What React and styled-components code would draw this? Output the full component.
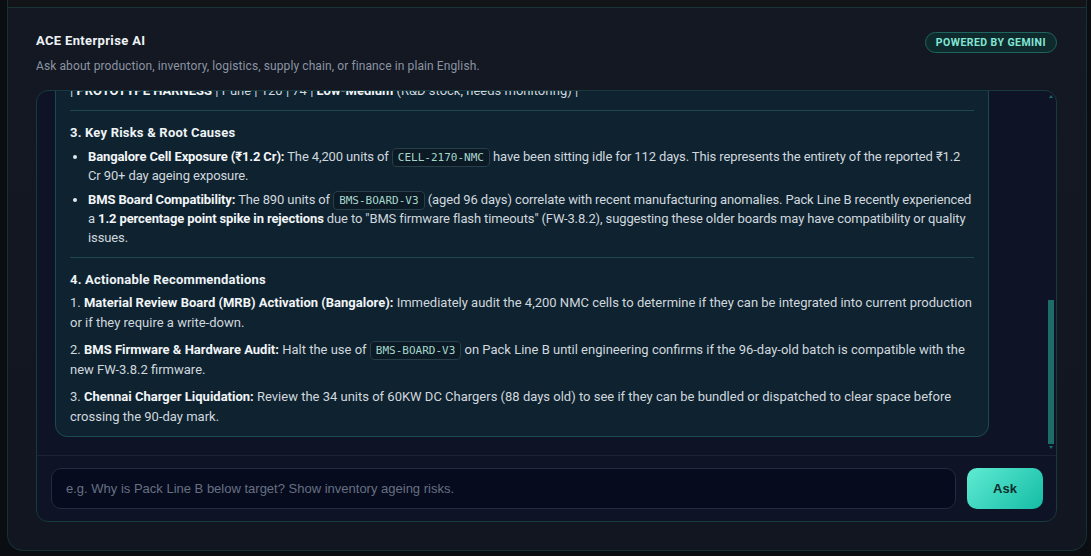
import React, { useLayoutEffect, useRef, useState } from "react";
import styled, { createGlobalStyle } from "styled-components";

const GlobalStyle = createGlobalStyle`
  * { box-sizing: border-box; }
  html, body { margin: 0; background: #0a0d11; }
  body {
    font-family: Roboto, "Noto Sans", "DejaVu Sans", sans-serif;
    color: #cfd8de;
  }
`;

// --- Layout shell ---
const Page = styled.div`
  height: 556px;
  display: flex;
  padding: 0 4px 5px 7px;
`;

const Panel = styled.div`
  flex: 1;
  display: flex;
  flex-direction: column;
  border: 1px solid #163033;
  border-top: none;
  border-radius: 0 0 16px 16px;
  background: linear-gradient(180deg, #131822 0%, #111621 100%);
  overflow: hidden;
`;

const Strip = styled.div`
  height: 8px;
  flex-shrink: 0;
  background: #121418;
  border-bottom: 1px solid #173437;
`;

const Body = styled.section`
  flex: 1;
  display: flex;
  flex-direction: column;
  padding: 23px 29px 27px 28px;
  min-height: 0;
`;

// --- Header ---
const Header = styled.header`
  display: flex;
  justify-content: space-between;
  align-items: flex-start;
`;

const Title = styled.h1`
  margin: 1px 0 0;
  font-size: 13px;
  line-height: 18px;
  font-weight: 700;
  letter-spacing: 0.35px;
  color: #eef2f5;
`;

const Subtitle = styled.p`
  margin: 7px 0 0;
  font-size: 12px;
  line-height: 18px;
  letter-spacing: 0.1px;
  color: #8b94a2;
`;

const Badge = styled.span`
  display: inline-flex;
  align-items: center;
  height: 21px;
  margin-top: 1px;
  padding: 0 10px;
  border-radius: 999px;
  border: 1px solid #1e655f;
  background: #0f2a2d;
  color: #82e6d5;
  font-size: 10.5px;
  font-weight: 700;
  letter-spacing: 0.45px;
`;

// --- Chat container ---
const Chat = styled.div`
  margin-top: 15px;
  height: 432px;
  display: flex;
  flex-direction: column;
  border: 1px solid #163a3d;
  border-radius: 12px;
  background: #0e1426;
  overflow: hidden;
`;

const ScrollArea = styled.div`
  position: relative;
  flex: 1;
  min-height: 0;
  display: flex;
`;

const Scroll = styled.div`
  flex: 1;
  overflow-y: auto;
  scrollbar-width: none;
  padding: 18px 8px 18px 18px;
  display: flex;
  flex-direction: column;
  gap: 14px;

  &::-webkit-scrollbar {
    display: none;
  }
`;

// drawn scrollbar (the native one is hidden in the capture)
const Track = styled.div`
  position: absolute;
  top: 0;
  bottom: 0;
  right: 1px;
  width: 8px;
  pointer-events: none;
`;

const Thumb = styled.div`
  position: absolute;
  left: 1px;
  right: 1px;
  background: #1d6c67;
`;

const Arrow = styled.span`
  position: absolute;
  left: 2px;
  ${(p) => (p.$down ? "bottom: 6px;" : "top: 4px;")}
  width: 0;
  height: 0;
  border-left: 2.5px solid transparent;
  border-right: 2.5px solid transparent;
  ${(p) => (p.$down ? "border-top" : "border-bottom")}: 3px solid #1d6c67;
`;

const Bubble = styled.div`
  flex-shrink: 0;
  align-self: ${(p) => (p.$user ? "flex-end" : "flex-start")};
  width: ${(p) => (p.$user ? "auto" : "934px")};
  max-width: 934px;
  padding: ${(p) => (p.$user ? "10px 14px" : "12px 14px 10px")};
  border-radius: 12px;
  border: 1px solid ${(p) => (p.$user ? "#1f5f5a" : "#1b4b50")};
  background: ${(p) => (p.$user ? "#123331" : "#0f2230")};
  font-size: 13px;
  line-height: 19.5px;
  color: ${(p) => (p.$user ? "#e3f5f1" : "#cfd8de")};

  strong {
    color: #f1f5f7;
    font-weight: 700;
  }
  p {
    margin: 0 0 8px;
  }
  > :last-child {
    margin-bottom: 0;
  }
`;

const Heading = styled.h4`
  margin: 0 0 4px;
  font-size: 13px;
  line-height: 19.5px;
  font-weight: 700;
  letter-spacing: 0.2px;
  color: #eef3f5;
`;

const Rule = styled.hr`
  border: none;
  border-top: 1px solid #1d474c;
  margin: 10px 0 12px;
`;

const Bullets = styled.ul`
  margin: 0;
  padding-left: 18px;
  line-height: 19px;
  letter-spacing: -0.12px;

  li {
    margin-bottom: 5px;
  }
  li::marker {
    color: #e2e9ed;
  }
`;

const Code = styled.code`
  font-family: "DejaVu Sans Mono", "Liberation Mono", monospace;
  font-size: 11px;
  line-height: 1;
  letter-spacing: 0;
  padding: 2px 5px;
  border-radius: 4px;
  border: 1px solid #263f48;
  background: #0b1a24;
  color: #a5d6cc;
`;

// --- Input row ---
const InputRow = styled.form`
  flex-shrink: 0;
  display: flex;
  gap: 11px;
  padding: 12px 13px 12px 14px;
  border-top: 1px solid #1c2434;
`;

const Input = styled.input`
  flex: 1;
  height: 41px;
  padding: 0 14px;
  border-radius: 10px;
  border: 1px solid #252b3e;
  background: #060b1d;
  color: #e1e6ea;
  font-family: "Liberation Sans", Arial, sans-serif;
  font-size: 13px;
  outline: none;

  &::placeholder {
    color: #667083;
  }
`;

const AskButton = styled.button`
  width: 76px;
  height: 41px;
  border: none;
  border-radius: 10px;
  background: linear-gradient(135deg, #5febd3 0%, #15bca5 100%);
  color: #0f2e2c;
  font-family: "Liberation Sans", Arial, sans-serif;
  font-size: 13px;
  font-weight: 700;
  cursor: pointer;
`;

const tableRows = [
  ["CELL-2170-NMC", "Bangalore | 4,200 | 112", "High", "(₹1.2 Cr exposure)"],
  ["BMS-BOARD-V3", "Pune | 890 | 96", "High", "(quality correlation)"],
  ["60KW DC CHARGER", "Chennai | 34 | 88", "Medium", "(nearing 90-day mark)"],
  ["THERMAL PAD KIT", "Bangalore | 2,600 | 81", "Medium", "(slow-moving consumable)"],
  ["HV CONTACTOR", "Pune | 410 | 79", "Medium", "(supplier recall pending)"],
  ["PROTOTYPE HARNESS", "Pune | 120 | 74", "Low-Medium", "(R&D stock, needs monitoring)"],
];

// track runs from 9px below the top to 11px above the bottom of the scroll area
const TRACK_TOP = 9;
const TRACK_BOTTOM = 11;

export default function App() {
  const scrollRef = useRef(null);
  const [bar, setBar] = useState({ top: 0, height: 0 });

  const measure = () => {
    const el = scrollRef.current;
    if (!el) return;
    const track = el.clientHeight - TRACK_TOP - TRACK_BOTTOM;
    const height = Math.max(20, (track * el.clientHeight) / el.scrollHeight);
    const range = el.scrollHeight - el.clientHeight;
    const top = TRACK_TOP + (range > 0 ? ((track - height) * el.scrollTop) / range : 0);
    setBar({ top, height });
  };

  useLayoutEffect(() => {
    const el = scrollRef.current;
    if (el) el.scrollTop = el.scrollHeight;
    measure();
  }, []);

  return (
    <>
      <GlobalStyle />
      <Page>
        <Panel>
          <Strip />
          <Body>
            <Header>
              <div>
                <Title>ACE Enterprise AI</Title>
                <Subtitle>
                  Ask about production, inventory, logistics, supply chain, or finance in plain English.
                </Subtitle>
              </div>
              <Badge>POWERED BY GEMINI</Badge>
            </Header>

            <Chat>
              <ScrollArea>
                <Scroll ref={scrollRef} onScroll={measure}>
                  <Bubble>
                    <p>Hello! I'm ACE Enterprise AI. Ask me anything about your plants, stock or shipments.</p>
                  </Bubble>
                  <Bubble $user>Show inventory ageing risks across all plants.</Bubble>
                  <Bubble>
                    <Heading>1. Executive Summary</Heading>
                    <p>
                      Inventory ageing beyond 90 days stands at <strong>₹1.2 Cr</strong>, concentrated almost
                      entirely in a single SKU at the Bangalore plant. Two further batches are approaching the
                      90-day threshold and should be actioned this week to avoid additional write-down exposure.
                      Overall stock cover remains healthy at 38 days, with Pune and Chennai trending within
                      planned limits for the current quarter.
                    </p>
                    <Rule />
                    <Heading>2. Inventory Ageing Snapshot</Heading>
                    <p>The following SKUs have crossed or are approaching the 90-day ageing threshold:</p>
                    <p>| Item | Plant | Qty | Age (Days) | Risk Level |</p>
                    <p>| :--- | :--- | :--- | :--- | :--- |</p>
                    {tableRows.map(([item, mid, risk, note]) => (
                      <p key={item}>
                        | <strong>{item}</strong> | {mid} | <strong>{risk}</strong> {note} |
                      </p>
                    ))}
                    <Rule />
                    <Heading>3. Key Risks &amp; Root Causes</Heading>
                    <Bullets>
                      <li>
                        <strong>Bangalore Cell Exposure (₹1.2 Cr):</strong> The 4,200 units of{" "}
                        <Code>CELL-2170-NMC</Code> have been sitting idle for 112 days. This represents the
                        entirety of the reported ₹1.2 Cr 90+ day ageing exposure.
                      </li>
                      <li>
                        <strong>BMS Board Compatibility:</strong> The 890 units of <Code>BMS-BOARD-V3</Code>{" "}
                        (aged 96 days) correlate with recent manufacturing anomalies. Pack Line B recently
                        experienced a <strong>1.2 percentage point spike in rejections</strong> due to "BMS
                        firmware flash timeouts" (FW-3.8.2), suggesting these older boards may have
                        compatibility or quality issues.
                      </li>
                    </Bullets>
                    <Rule />
                    <Heading>4. Actionable Recommendations</Heading>
                    <p>
                      1. <strong>Material Review Board (MRB) Activation (Bangalore):</strong> Immediately audit
                      the 4,200 NMC cells to determine if they can be integrated into current production or if
                      they require a write-down.
                    </p>
                    <p>
                      2. <strong>BMS Firmware &amp; Hardware Audit:</strong> Halt the use of{" "}
                      <Code>BMS-BOARD-V3</Code> on Pack Line B until engineering confirms if the 96-day-old
                      batch is compatible with the new FW-3.8.2 firmware.
                    </p>
                    <p>
                      3. <strong>Chennai Charger Liquidation:</strong> Review the 34 units of 60KW DC Chargers
                      (88 days old) to see if they can be bundled or dispatched to clear space before crossing
                      the 90-day mark.
                    </p>
                  </Bubble>
                </Scroll>
                <Track>
                  <Arrow />
                  <Thumb style={{ top: bar.top, height: bar.height }} />
                  <Arrow $down />
                </Track>
              </ScrollArea>

              <InputRow onSubmit={(e) => e.preventDefault()}>
                <Input placeholder="e.g. Why is Pack Line B below target? Show inventory ageing risks." />
                <AskButton type="submit">Ask</AskButton>
              </InputRow>
            </Chat>
          </Body>
        </Panel>
      </Page>
    </>
  );
}
